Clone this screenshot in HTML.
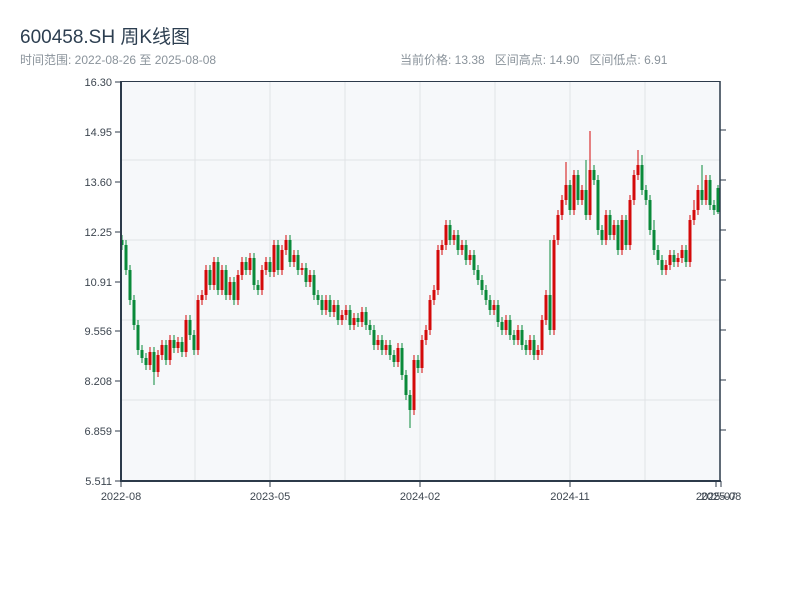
<!DOCTYPE html>
<html><head><meta charset="utf-8"><style>
body{margin:0;width:800px;height:600px;background:#fff;font-family:"Liberation Sans","Noto Sans CJK SC",sans-serif;overflow:hidden;position:relative}
.t{position:absolute;left:20px;top:22px;font-size:19px;color:#2c3e50}
.s{position:absolute;left:20px;top:51px;font-size:12px;color:#8a939b}
.r{position:absolute;left:400px;top:51px;font-size:12px;color:#8a939b;white-space:pre}
svg{position:absolute;left:0;top:0}
</style></head><body>
<div class="t">600458.SH 周K线图</div>
<div class="s">时间范围: 2022-08-26 至 2025-08-08</div>
<div class="r">当前价格: 13.38   区间高点: 14.90   区间低点: 6.91</div>
<svg width="800" height="600" font-family="Liberation Sans, sans-serif" font-size="11" fill="#3d4650">
<rect x="121" y="82" width="599" height="399" fill="#f6f8fa"/>
<path d="M195 82V481M270 82V481M345 82V481M420 82V481M495 82V481M570 82V481M645 82V481M121 160H720M121 240H720M121 320H720M121 400H720" stroke="#e0e3e6" fill="none"/>
<!-- red wicks -->
<path fill="none" stroke="#d40a0a" stroke-width="1" d="M150 347V370M158 350V377M162 340V360M170 335V365M178 337V353M186 315V357M198 295V355M202 290V305M206 265V300M214 257V290M222 265V295M230 277V300M238 270V305M242 257V280M250 253V275M262 265V295M266 257V275M274 240V277M282 245V275M286 235V255M294 250V267M302 263V275M310 270V287M326 295V315M334 300V317M342 310V325M346 305V320M354 313V330M362 307V327M378 335V350M386 340V355M398 343V367M414 355V415M422 335V373M426 325V345M430 295V335M434 285V305M438 245V295M442 240V255M446 220V250M454 230V245M462 240V255M470 250V265M494 300V315M506 315V335M518 325V345M530 335V355M538 345V360M542 315V355M546 290V325M554 235V335M558 210V245M562 195V220M566 162V205M574 170V215M582 185V205M590 131V220M606 210V245M614 220V240M622 215V255M630 195V250M634 170V205M638 150V180M666 260V275M670 250V270M678 253V267M682 245V263M690 215V267M694 200V225M698 185V215M706 175V205"/>
<!-- red bodies -->
<path fill="none" stroke="#d40a0a" stroke-width="3" d="M150 365V352M158 372V355M162 355V345M170 360V340M178 348V342M186 352V320M198 350V300M202 300V295M206 295V270M214 285V262M222 290V270M230 295V282M238 300V275M242 275V262M250 270V258M262 290V270M266 270V262M274 272V245M282 270V250M286 250V240M294 262V255M302 270V268M310 282V275M326 310V300M334 312V305M342 320V315M346 315V310M354 325V318M362 322V312M378 345V340M386 350V345M398 362V348M414 410V360M422 368V340M426 340V330M430 330V300M434 300V290M438 290V250M442 250V245M446 245V225M454 240V235M462 250V245M470 260V255M494 310V305M506 330V320M518 340V330M530 350V340M538 355V350M542 350V320M546 320V295M554 330V240M558 240V215M562 215V200M566 200V185M574 210V175M582 200V190M590 215V170M606 240V215M614 235V225M622 250V220M630 245V200M634 200V175M638 175V165M666 270V265M670 265V255M678 262V258M682 258V250M690 262V220M694 220V210M698 210V190M706 200V180"/>
<!-- green wicks -->
<path fill="none" stroke="#0a8a3a" stroke-width="1" d="M122 235V250M126 240V275M130 265V305M134 295V330M138 320V355M142 345V363M146 353V370M154 347V385M166 340V365M174 335V353M182 337V357M190 315V340M194 330V355M210 265V290M218 257V295M226 265V300M234 277V305M246 257V275M254 253V290M258 280V295M270 257V277M278 240V275M290 235V267M298 250V275M306 263V287M314 270V300M318 290V305M322 295V315M330 295V317M338 300V325M350 305V330M358 313V327M366 307V330M370 320V335M374 325V350M382 335V355M390 340V360M394 350V367M402 343V380M406 370V400M410 390V428M418 355V373M450 220V245M458 230V255M466 240V265M474 250V275M478 265V285M482 275V295M486 285V305M490 295V315M498 300V327M502 317V335M510 315V340M514 330V345M522 325V350M526 340V355M534 335V360M550 240V335M570 180V215M578 170V205M586 160V220M594 165V185M598 175V235M602 225V245M610 210V240M618 220V255M626 215V250M642 155V195M646 185V205M650 195V235M654 220V255M658 245V265M662 255V275M674 250V267M686 245V267M702 165V205M710 175V210M714 200V215M718 185V214"/>
<!-- green bodies -->
<path fill="none" stroke="#0a8a3a" stroke-width="3" d="M122 240V245M126 245V270M130 270V300M134 300V325M138 325V350M142 350V358M146 358V365M154 352V372M166 345V360M174 340V348M182 342V352M190 320V335M194 335V350M210 270V285M218 262V290M226 270V295M234 282V300M246 262V270M254 258V285M258 285V290M270 262V272M278 245V270M290 240V262M298 255V270M306 268V282M314 275V295M318 295V300M322 300V310M330 300V312M338 305V320M350 310V325M358 318V322M366 312V325M370 325V330M374 330V345M382 340V350M390 345V355M394 355V362M402 348V375M406 375V395M410 395V410M418 360V368M450 225V240M458 235V250M466 245V260M474 255V270M478 270V280M482 280V290M486 290V300M490 300V310M498 305V322M502 322V330M510 320V335M514 335V340M522 330V345M526 345V350M534 340V355M550 295V330M570 185V210M578 175V200M586 190V215M594 170V180M598 180V230M602 230V240M610 215V235M618 225V250M626 220V245M642 165V190M646 190V200M650 200V230M654 230V250M658 250V260M662 260V270M674 255V262M686 250V262M702 190V200M710 180V205M714 205V210M718 188V212"/>
<!-- axes -->
<path d="M121 81.5H720" stroke="#2c3a4a" fill="none"/>
<path d="M121 81V482" stroke="#2c3a4a" stroke-width="2" fill="none"/>
<path d="M720 81V482" stroke="#2c3a4a" stroke-width="1.5" fill="none"/>
<path d="M120 481H721" stroke="#2c3a4a" stroke-width="2" fill="none"/>
<path d="M115 82H121M115 132H121M115 182H121M115 232H121M115 282H121M115 331H121M115 381H121M115 431H121M115 481H121M720 130H726M720 180H726M720 230H726M720 280H726M720 330H726M720 380H726M720 430H726M121 481V487M270 481V487M420 481V487M570 481V487M716 481V487M721 481V487" stroke="#2c3a4a" fill="none"/>
<g text-anchor="end">
<text x="112" y="86">16.30</text><text x="112" y="136">14.95</text><text x="112" y="186">13.60</text><text x="112" y="236">12.25</text><text x="112" y="286">10.91</text><text x="112" y="335">9.556</text><text x="112" y="385">8.208</text><text x="112" y="435">6.859</text><text x="112" y="485">5.511</text>
</g>
<g text-anchor="middle">
<text x="121" y="500">2022-08</text><text x="270" y="500">2023-05</text><text x="420" y="500">2024-02</text><text x="570" y="500">2024-11</text><text x="716" y="500">2025-07</text><text x="721" y="500">2025-08</text>
</g>
</svg>
</body></html>
